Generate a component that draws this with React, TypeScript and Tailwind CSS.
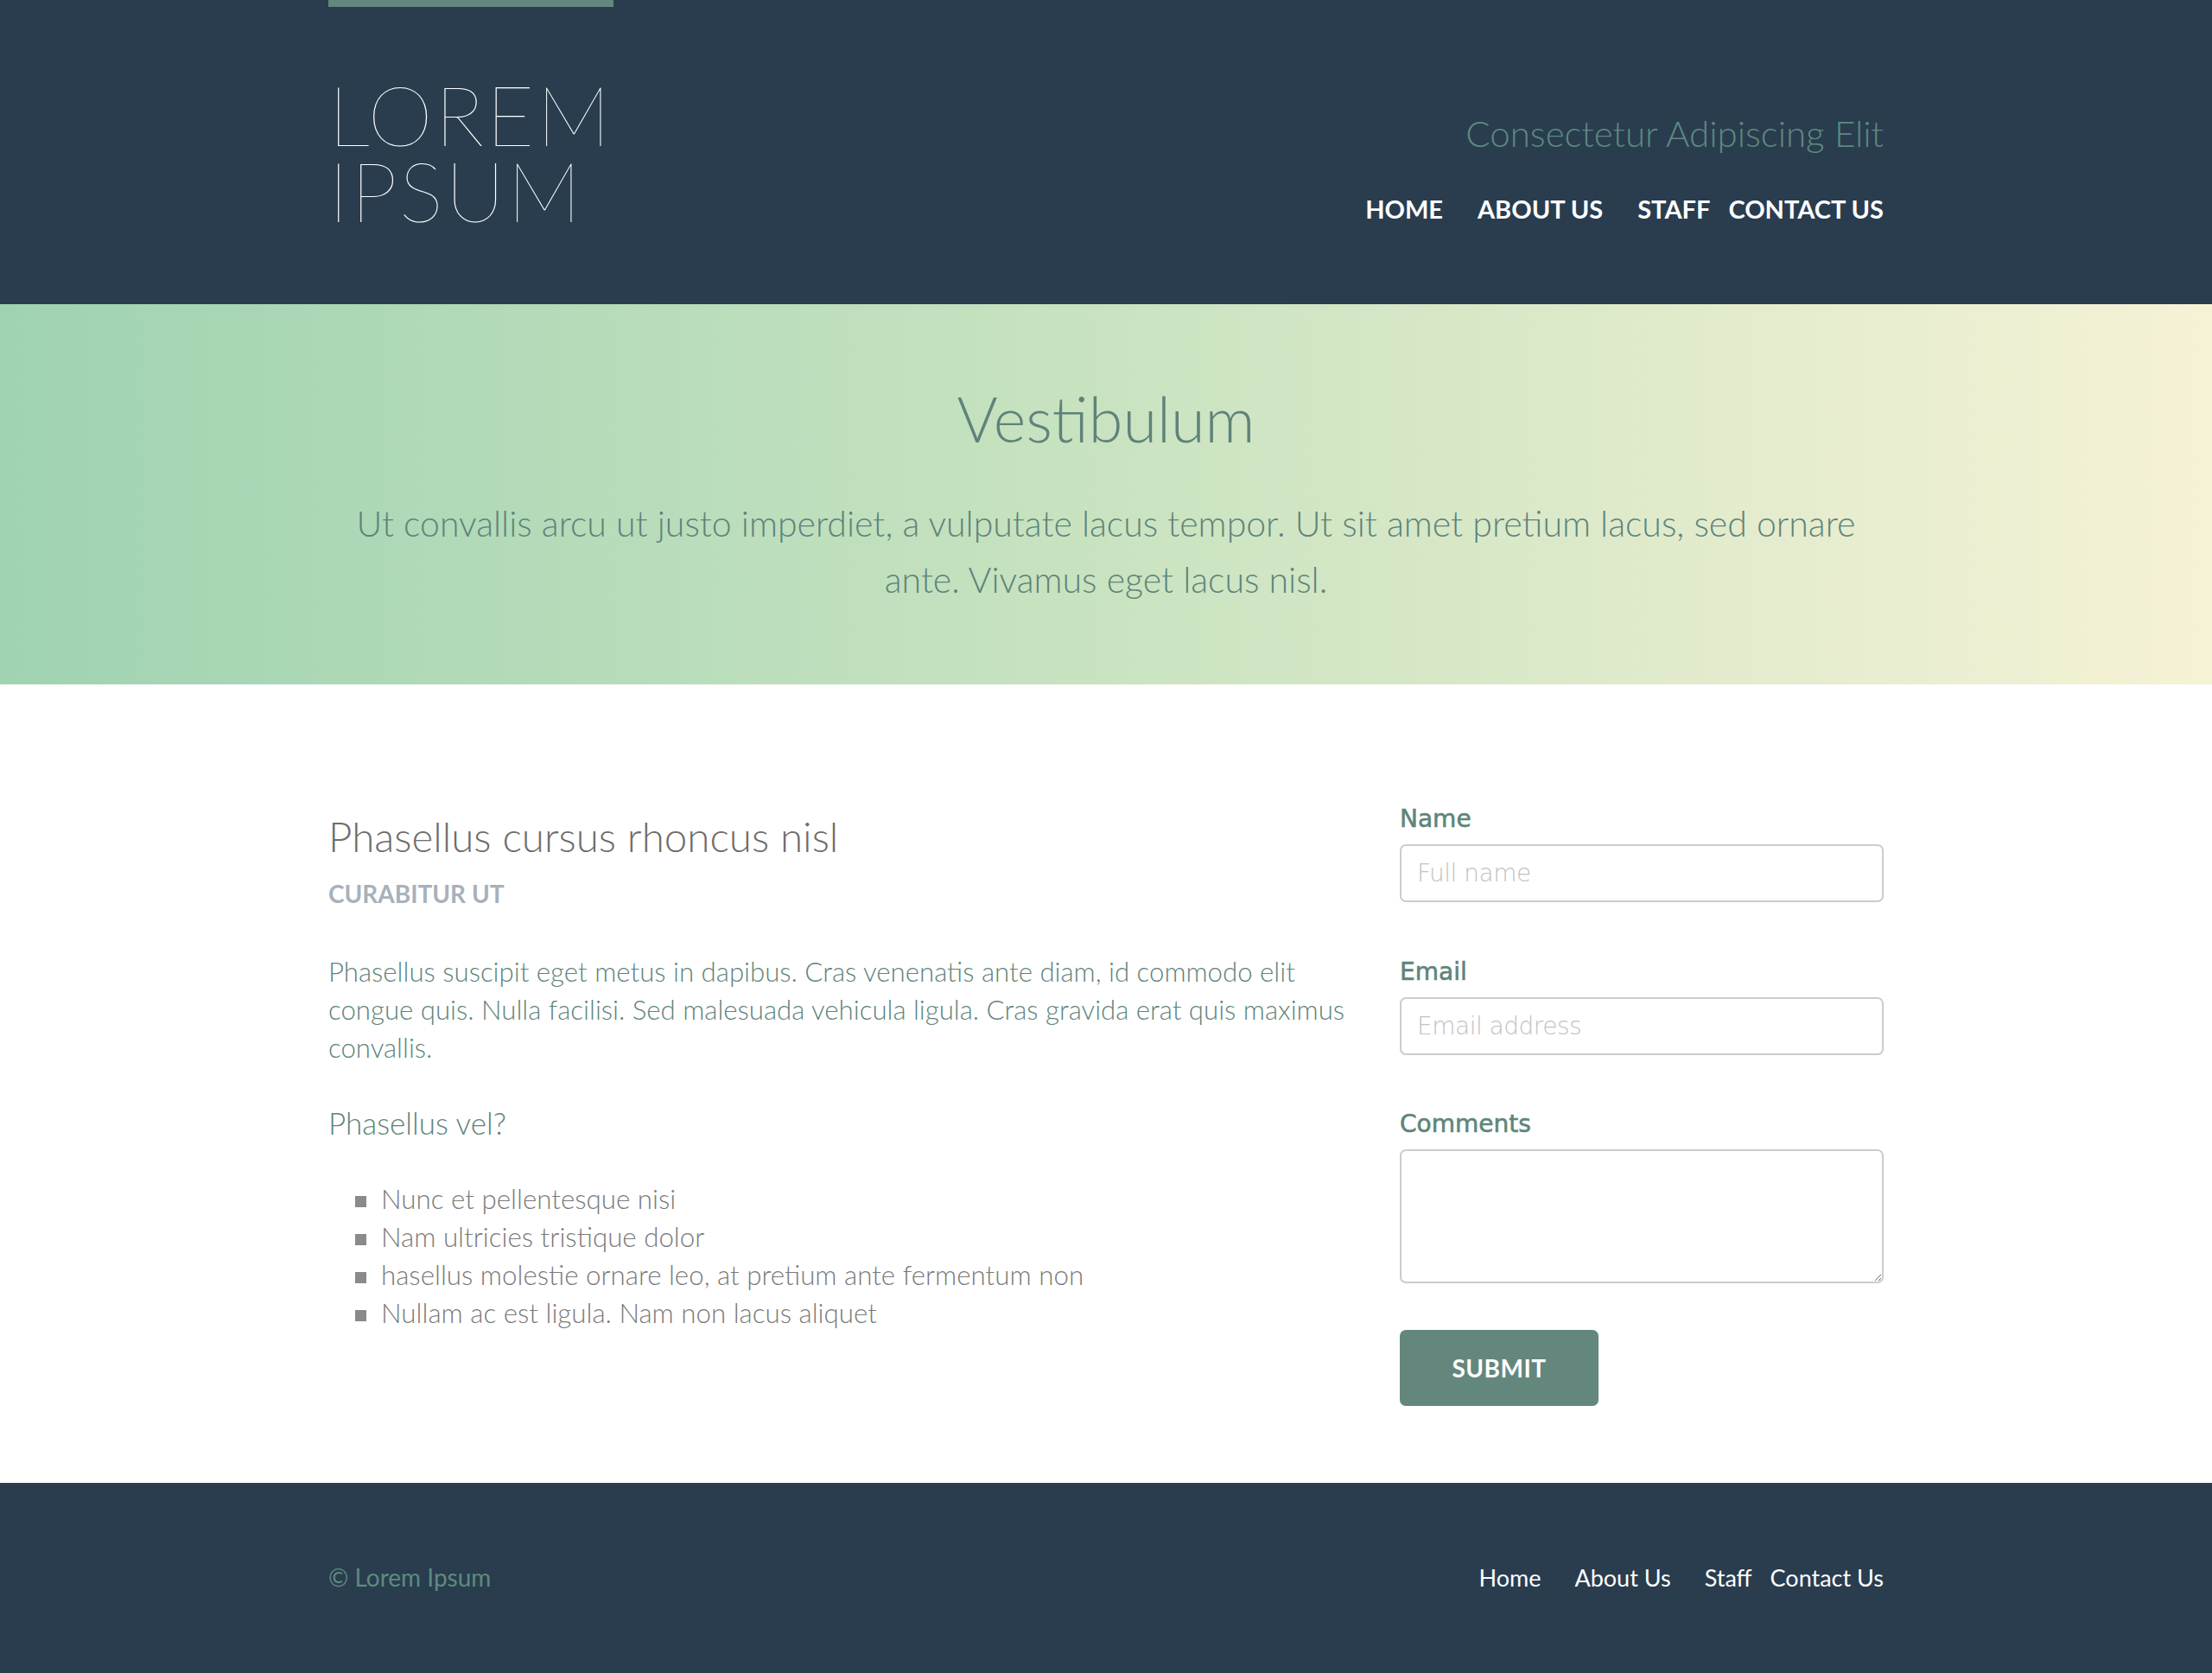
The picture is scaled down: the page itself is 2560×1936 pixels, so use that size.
import React from 'react';

const navLinks = [
  { label: 'HOME', gap: '' },
  { label: 'ABOUT US', gap: 'ml-[40px]' },
  { label: 'STAFF', gap: 'ml-[40px]' },
  { label: 'CONTACT US', gap: 'ml-[21px]' },
];

const footerLinks = [
  { label: 'Home', gap: '' },
  { label: 'About Us', gap: 'ml-[39px]' },
  { label: 'Staff', gap: 'ml-[39px]' },
  { label: 'Contact Us', gap: 'ml-[21px]' },
];

const bullets = [
  'Nunc et pellentesque nisi',
  'Nam ultricies tristique dolor',
  'hasellus molestie ornare leo, at pretium ante fermentum non',
  'Nullam ac est ligula. Nam non lacus aliquet',
];

const Field = ({ label, children }: any) => (
  <div className="flex flex-col">
    <label className="font-['DejaVu_Sans',sans-serif] text-[28px] leading-[34px] text-[#5e857b] [-webkit-text-stroke:0.6px_#5e857b]">
      {label}
    </label>
    <div className="mt-[12px]">{children}</div>
  </div>
);

const App = () => {
  return (
    <div className="min-h-screen flex flex-col bg-white font-['Lato',sans-serif]">
      {/* Header */}
      <header className="bg-[#293d4f] h-[352px]">
        <div className="w-[1800px] mx-auto flex justify-between items-start">
          <div>
            <div className="w-[330px] h-2 bg-[#64877d]"></div>
            <div className="mt-[80px] text-white text-[96px] leading-[88px] font-thin tracking-[2.5px]">
              <div>LOREM</div>
              <div>IPSUM</div>
            </div>
          </div>
          <div className="pt-[129px] text-right">
            <div className="text-[42px] leading-[1.2] font-light text-[#5e8a7e]">Consectetur Adipiscing Elit</div>
            <nav className="mt-[46px] flex justify-end text-white text-[29px] leading-[1.2] font-bold">
              {navLinks.map((item) => (
                <a key={item.label} href="#" className={item.gap}>
                  {item.label}
                </a>
              ))}
            </nav>
          </div>
        </div>
      </header>

      {/* Hero */}
      <section className="h-[440px] bg-gradient-to-r from-[#9fd3b2] via-[#c9e3c0] to-[#f6f2d6] pt-[89px]">
        <div className="w-[1800px] mx-auto text-center text-[#5e837a]">
          <h1 className="text-[72px] leading-[1.2] font-light">Vestibulum</h1>
          <p className="mt-[46px] max-w-[1760px] mx-auto text-[41px] leading-[65px] font-light">
            Ut convallis arcu ut justo imperdiet, a vulputate lacus tempor. Ut sit amet pretium lacus, sed ornare ante. Vivamus eget lacus nisl.
          </p>
        </div>
      </section>

      {/* Main */}
      <main className="pt-[139px] pb-[89px]">
        <div className="w-[1800px] mx-auto grid grid-cols-[1200px_600px]">
          <div className="pt-[8px] pr-[10px]">
            <h2 className="text-[47.5px] leading-[1.2] font-light text-[#6f6d6b]">Phasellus cursus rhoncus nisl</h2>
            <h3 className="mt-[22px] text-[28px] leading-[1.2] font-bold text-[#a7b1bb] uppercase">Curabitur ut</h3>
            <p className="mt-[50px] text-[31.2px] leading-[44px] font-light text-[#5e837a]">
              Phasellus suscipit eget metus in dapibus. Cras venenatis ante diam, id commodo elit congue quis. Nulla facilisi. Sed malesuada vehicula ligula. Cras gravida erat quis maximus convallis.
            </p>
            <h4 className="mt-[44px] text-[35px] leading-[1.2] font-light text-[#5e837a]">Phasellus vel?</h4>
            <ul className="mt-[45px] ml-[31px]">
              {bullets.map((text) => (
                <li key={text} className="flex items-center text-[31.3px] leading-[44px] font-light text-[#7a7a7a]">
                  <span className="w-[13px] h-[13px] mt-[7px] bg-[#8a8a8a] shrink-0"></span>
                  <span className="ml-[17px]">{text}</span>
                </li>
              ))}
            </ul>
          </div>

          <form className="pl-10 flex flex-col" onSubmit={(e) => e.preventDefault()}>
            <Field label="Name">
              <input
                type="text"
                placeholder="Full name"
                className="w-full h-[67px] px-[18px] border-2 border-[#cccccc] rounded-[7px] bg-white font-['DejaVu_Sans',sans-serif] font-extralight text-[28px] tracking-[-0.5px] text-[#555] placeholder:text-[#c2c2c2] outline-none"
              />
            </Field>
            <div className="mt-[64px]">
              <Field label="Email">
                <input
                  type="email"
                  placeholder="Email address"
                  className="w-full h-[67px] px-[18px] border-2 border-[#cccccc] rounded-[7px] bg-white font-['DejaVu_Sans',sans-serif] font-extralight text-[28px] tracking-[-0.5px] text-[#555] placeholder:text-[#c2c2c2] outline-none"
                />
              </Field>
            </div>
            <div className="mt-[63px]">
              <Field label="Comments">
                <textarea className="block w-full h-[155px] px-[18px] py-3 border-2 border-[#cccccc] rounded-[7px] bg-white text-[28px] outline-none"></textarea>
              </Field>
            </div>
            <div className="mt-[54px]">
              <button
                type="submit"
                className="w-[230px] h-[88px] bg-[#64877d] rounded-[7px] text-white text-[28px] font-bold tracking-[0.5px]"
              >
                SUBMIT
              </button>
            </div>
          </form>
        </div>
      </main>

      {/* Footer */}
      <footer className="bg-[#293d4f] flex-1 min-h-[220px]">
        <div className="w-[1800px] mx-auto h-[220px] flex items-center justify-between text-[27px] leading-[1.2]">
          <div className="text-[#5e8a7e] text-[28px]">© Lorem Ipsum</div>
          <nav className="flex text-white">
            {footerLinks.map((item) => (
              <a key={item.label} href="#" className={item.gap}>
                {item.label}
              </a>
            ))}
          </nav>
        </div>
      </footer>
    </div>
  );
};

export default App;
